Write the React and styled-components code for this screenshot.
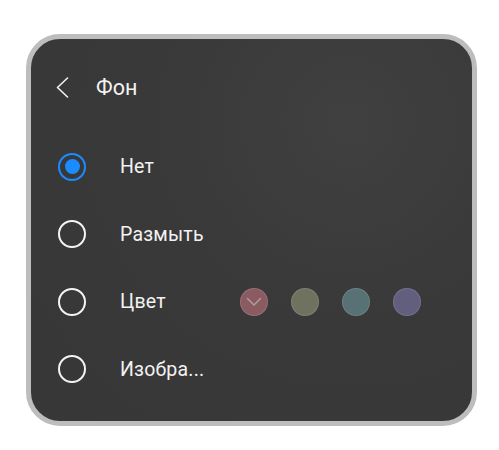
import React from "react";
import styled, { createGlobalStyle } from "styled-components";

const Global = createGlobalStyle`
  html, body { margin: 0; padding: 0; background: #ffffff; }
  body { font-family: Roboto, "Noto Sans", "Liberation Sans", sans-serif; }
`;

const Page = styled.div`
  padding: 34px 0 0 26px;
`;

const Panel = styled.div`
  box-sizing: border-box;
  width: 451px;
  height: 392px;
  border: 5px solid #bdbdbd;
  border-radius: 34px;
  background: radial-gradient(circle at 72% 22%, #414041 0%, #3a393a 45%, #383738 100%);
  padding: 28px 0 0 26px;
  display: flex;
  flex-direction: column;
  color: #f2f2f2;
`;

const Header = styled.div`
  height: 40px;
  display: flex;
  align-items: center;
  gap: 27px;
`;

const Back = styled.svg`
  width: 13px;
  height: 21px;
  display: block;
  margin-left: -1px;
`;

const Title = styled.div`
  font-size: 21.5px;
  font-weight: 400;
  letter-spacing: 0.1px;
`;

const List = styled.div`
  margin-top: 26px;
  display: flex;
  flex-direction: column;
`;

const Row = styled.div`
  height: 67.5px;
  display: flex;
  align-items: center;
  padding-left: 1px;
`;

const Radio = styled.div`
  box-sizing: border-box;
  width: 28px;
  height: 28px;
  border-radius: 50%;
  border: 2px solid ${(p) => (p.$checked ? "#1a8cff" : "#f4f4f4")};
  display: flex;
  align-items: center;
  justify-content: center;
  flex: none;
`;

const Dot = styled.div`
  width: 15px;
  height: 15px;
  border-radius: 50%;
  background: #1a8cff;
`;

const Label = styled.div`
  width: 120px;
  margin-left: 34px;
  font-size: 19.5px;
  font-weight: 400;
  letter-spacing: 0.2px;
  flex: none;
`;

const Swatches = styled.div`
  display: flex;
  gap: 23px;
`;

const Swatch = styled.div`
  box-sizing: border-box;
  width: 28px;
  height: 28px;
  border-radius: 50%;
  background: ${(p) => p.$color};
  border: 1px solid rgba(255, 255, 255, 0.12);
  display: flex;
  align-items: center;
  justify-content: center;
`;

const Check = styled.svg`
  width: 16px;
  height: 10px;
  display: block;
`;

const options = [
  { label: "Нет", checked: true },
  { label: "Размыть" },
  { label: "Цвет", colors: ["#8a5c62", "#6e725f", "#577174", "#625e7e"] },
  { label: "Изобра..." },
];

export default function App() {
  return (
    <>
      <Global />
      <Page>
        <Panel>
          <Header>
            <Back viewBox="0 0 13 21">
              <path d="M11.5 1 L1.5 10.5 L11.5 20" fill="none" stroke="#f2f2f2" strokeWidth="1.6" strokeLinecap="round" strokeLinejoin="round" />
            </Back>
            <Title>Фон</Title>
          </Header>
          <List>
            {options.map((o) => (
              <Row key={o.label}>
                <Radio $checked={o.checked}>{o.checked && <Dot />}</Radio>
                <Label>{o.label}</Label>
                {o.colors && (
                  <Swatches>
                    {o.colors.map((c, i) => (
                      <Swatch key={c} $color={c}>
                        {i === 0 && (
                          <Check viewBox="0 0 16 10">
                            <path d="M1.5 1.5 L8 8 L14.5 1.5" fill="none" stroke="#b49a9e" strokeWidth="1.5" strokeLinecap="round" strokeLinejoin="round" />
                          </Check>
                        )}
                      </Swatch>
                    ))}
                  </Swatches>
                )}
              </Row>
            ))}
          </List>
        </Panel>
      </Page>
    </>
  );
}
